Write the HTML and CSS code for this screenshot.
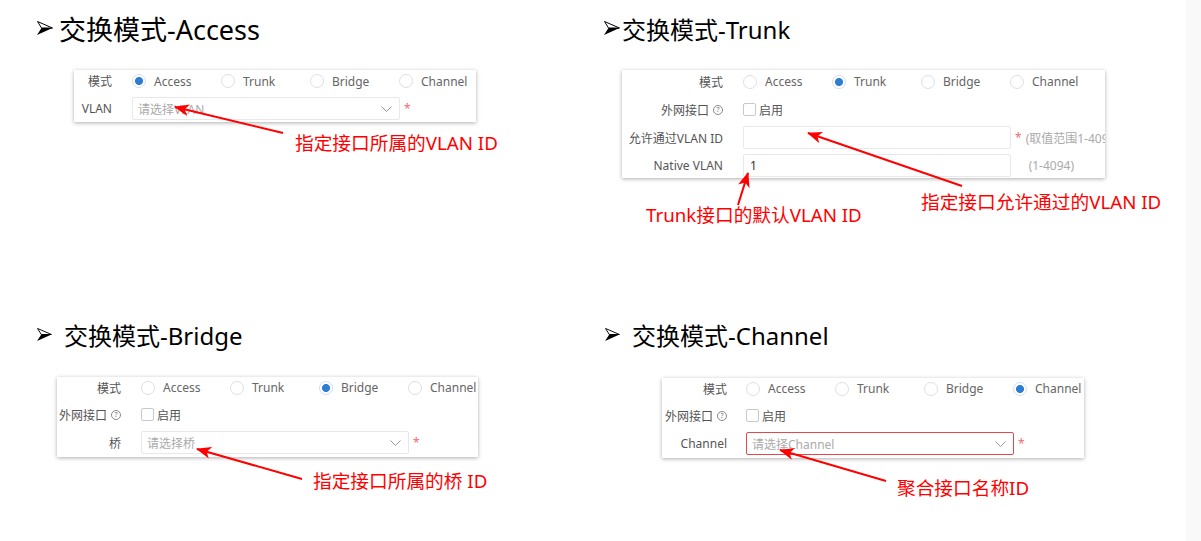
FILE: index.html
```html
<!DOCTYPE html>
<html lang="zh-CN">
<head>
<meta charset="utf-8">
<title>交换模式</title>
<link rel="stylesheet" href="styles.css">
</head>
<body>
<div class="page">
  <div class="slide">
    <!-- Access -->
    <section class="quad quad--top quad--a">
      <h2 class="heading heading--big">
        <svg class="bullet bullet--a" viewBox="0 0 16 14"><polygon points="0.5,0.5 15.5,7 4.5,7" fill="#fff" stroke="#000" stroke-width="1"/><polygon points="4.5,7 15.5,7 0,14" fill="#000"/></svg>
        <span>交换模式-Access</span>
      </h2>
      <div class="panel panel--access">
        <div class="row row--first">
          <div class="lbl">模式</div>
          <div class="radios">
            <span class="radio is-on"><i></i>Access</span>
            <span class="radio"><i></i>Trunk</span>
            <span class="radio"><i></i>Bridge</span>
            <span class="radio"><i></i>Channel</span>
          </div>
        </div>
        <div class="row">
          <div class="lbl">VLAN</div>
          <div class="select"><span class="ph">请选择VLAN</span><svg class="chev" viewBox="0 0 11 6"><polyline points="0.5,0.5 5.5,5.5 10.5,0.5" fill="none" stroke="#999" stroke-width="1"/></svg></div>
          <span class="req">*</span>
        </div>
      </div>
    </section>

    <!-- Trunk -->
    <section class="quad quad--top quad--t">
      <h2 class="heading">
        <svg class="bullet bullet--t" viewBox="0 0 16 14"><polygon points="0.5,0.5 15.5,7 4.5,7" fill="#fff" stroke="#000" stroke-width="1"/><polygon points="4.5,7 15.5,7 0,14" fill="#000"/></svg>
        <span>交换模式-Trunk</span>
      </h2>
      <div class="panel panel--trunk">
        <div class="row">
          <div class="lbl">模式</div>
          <div class="radios">
            <span class="radio"><i></i>Access</span>
            <span class="radio is-on"><i></i>Trunk</span>
            <span class="radio"><i></i>Bridge</span>
            <span class="radio"><i></i>Channel</span>
          </div>
        </div>
        <div class="row">
          <div class="lbl">外网接口<span class="qmark">?</span></div>
          <div class="check"><i></i>启用</div>
        </div>
        <div class="row">
          <div class="lbl">允许通过VLAN ID</div>
          <div class="input"></div>
          <span class="req">*</span>
          <span class="hint">(取值范围1-4094)</span>
        </div>
        <div class="row">
          <div class="lbl">Native VLAN</div>
          <div class="input"><span class="val">1</span></div>
          <span class="req req--hidden">*</span>
          <span class="hint hint--wide">(1-4094)</span>
        </div>
      </div>
    </section>

    <!-- Bridge -->
    <section class="quad quad--bottom quad--b">
      <h2 class="heading">
        <svg class="bullet bullet--b" viewBox="0 0 16 14"><polygon points="0.5,0.5 15.5,7 4.5,7" fill="#fff" stroke="#000" stroke-width="1"/><polygon points="4.5,7 15.5,7 0,14" fill="#000"/></svg>
        <span>交换模式-Bridge</span>
      </h2>
      <div class="panel panel--bridge">
        <div class="row row--clip">
          <div class="lbl">模式</div>
          <div class="radios">
            <span class="radio"><i></i>Access</span>
            <span class="radio"><i></i>Trunk</span>
            <span class="radio is-on"><i></i>Bridge</span>
            <span class="radio"><i></i>Channel</span>
          </div>
        </div>
        <div class="row">
          <div class="lbl">外网接口<span class="qmark">?</span></div>
          <div class="check"><i></i>启用</div>
        </div>
        <div class="row">
          <div class="lbl">桥</div>
          <div class="select"><span class="ph">请选择桥</span><svg class="chev" viewBox="0 0 11 6"><polyline points="0.5,0.5 5.5,5.5 10.5,0.5" fill="none" stroke="#999" stroke-width="1"/></svg></div>
          <span class="req">*</span>
        </div>
      </div>
    </section>

    <!-- Channel -->
    <section class="quad quad--bottom quad--c">
      <h2 class="heading">
        <svg class="bullet bullet--c" viewBox="0 0 16 14"><polygon points="0.5,0.5 15.5,7 4.5,7" fill="#fff" stroke="#000" stroke-width="1"/><polygon points="4.5,7 15.5,7 0,14" fill="#000"/></svg>
        <span>交换模式-Channel</span>
      </h2>
      <div class="panel panel--channel">
        <div class="row row--clip">
          <div class="lbl">模式</div>
          <div class="radios">
            <span class="radio"><i></i>Access</span>
            <span class="radio"><i></i>Trunk</span>
            <span class="radio"><i></i>Bridge</span>
            <span class="radio is-on"><i></i>Channel</span>
          </div>
        </div>
        <div class="row">
          <div class="lbl">外网接口<span class="qmark">?</span></div>
          <div class="check"><i></i>启用</div>
        </div>
        <div class="row">
          <div class="lbl">Channel</div>
          <div class="select select--error"><span class="ph">请选择Channel</span><svg class="chev" viewBox="0 0 11 6"><polyline points="0.5,0.5 5.5,5.5 10.5,0.5" fill="none" stroke="#999" stroke-width="1"/></svg></div>
          <span class="req">*</span>
        </div>
      </div>
    </section>
  </div>

  <!-- callout annotations -->
  <svg class="arrows" viewBox="0 0 1201 541" width="1201" height="541">
    <defs>
      <marker id="head" markerUnits="userSpaceOnUse" markerWidth="16" markerHeight="12" refX="14" refY="6" orient="auto">
        <path d="M0,0 L15,6 L0,12 L4,6 Z" fill="#f00"/>
      </marker>
    </defs>
    <g stroke="#f00" stroke-width="2" fill="none" marker-end="url(#head)">
      <line x1="283" y1="133" x2="175" y2="107"/>
      <line x1="738" y1="205" x2="748" y2="173"/>
      <line x1="962" y1="186" x2="808" y2="133"/>
      <line x1="302" y1="479" x2="197" y2="449"/>
      <line x1="886" y1="481" x2="780" y2="450"/>
    </g>
  </svg>
  <div class="note note--1">指定接口所属的VLAN ID</div>
  <div class="note note--2">Trunk接口的默认VLAN ID</div>
  <div class="note note--3">指定接口允许通过的VLAN ID</div>
  <div class="note note--4">指定接口所属的桥 ID</div>
  <div class="note note--5">聚合接口名称ID</div>
</div>
</body>
</html>
```

FILE: styles.css
```css
* { box-sizing: border-box; }

html, body {
  margin: 0;
  padding: 0;
}

body {
  background: linear-gradient(to right, #ffffff 1186px, #f9f9f9 1186px);
  font-family: "Noto Sans", "Noto Sans CJK SC", sans-serif;
}

.page {
  position: relative;
  width: 1201px;
  height: 541px;
  overflow: hidden;
}

.slide {
  display: grid;
  grid-template-columns: 600px 601px;
  grid-template-rows: 305px 236px;
}

.quad {
  display: flex;
  flex-direction: column;
  align-items: flex-start;
}

.quad--top { padding-top: 13px; }
.quad--bottom { padding-top: 14px; }

.quad--a { padding-left: 37px; }
.quad--t { padding-left: 4px; }
.quad--b { padding-left: 37px; }
.quad--c { padding-left: 5px; }

/* headings */
.heading {
  display: flex;
  align-items: center;
  height: 30px;
  margin: 0;
  font-size: 24px;
  font-weight: 400;
  color: #000;
  white-space: nowrap;
  font-family: "Noto Sans", "Noto Sans CJK SC", sans-serif;
}

.heading--big { font-size: 27px; }

.bullet {
  width: 16px;
  height: 14px;
  flex: none;
}

.bullet--a { margin-right: 6px; }
.bullet--t { margin-right: 2px; }
.bullet--b { margin-right: 12px; width: 15px; height: 13px; }
.bullet--c { margin-right: 12px; width: 15px; height: 13px; }

/* panel */
.panel {
  --lbl: 38px;
  --r1: 23px;
  display: flex;
  flex-direction: column;
  gap: 5px;
  background: #fff;
  box-shadow: 0 1px 4px rgba(0, 0, 0, 0.32);
  overflow: hidden;
  font-size: 12px;
  color: #666;
}

.panel--access {
  margin-top: 27px;
  margin-left: 37px;
  width: 402px;
  --lbl: 38px;
  --r1: 22px;
  padding-bottom: 2px;
}

.panel--trunk {
  margin-top: 27px;
  margin-left: 18px;
  width: 483px;
  --lbl: 101px;
  --r1: 23px;
  padding-bottom: 1px;
}

.panel--bridge {
  margin-top: 28px;
  margin-left: 20px;
  width: 421px;
  --lbl: 64px;
  --r1: 21px;
  padding-bottom: 3px;
}

.panel--channel {
  margin-top: 29px;
  margin-left: 57px;
  width: 422px;
  --lbl: 65px;
  --r1: 21px;
  padding-bottom: 3px;
}

.row {
  display: flex;
  align-items: center;
  height: 23px;
  white-space: nowrap;
}

.row:first-child { height: var(--r1); }

.lbl {
  flex: none;
  width: var(--lbl);
  display: flex;
  justify-content: flex-end;
  align-items: center;
  margin-right: 20px;
  color: #555;
}

.panel--channel .lbl { margin-right: 19px; }

.qmark {
  display: inline-flex;
  align-items: center;
  justify-content: center;
  width: 10px;
  height: 10px;
  margin-left: 4px;
  border: 1px solid #8a8a8a;
  border-radius: 50%;
  font-size: 7px;
  line-height: 1;
  color: #777;
}

/* radios */
.radios {
  display: flex;
  flex: none;
}

.radio {
  display: flex;
  align-items: center;
  width: 89px;
  flex: none;
  color: #666;
}

.radio i {
  width: 14px;
  height: 14px;
  margin-right: 8px;
  border: 1px solid #dcdfe6;
  border-radius: 50%;
  background: #fff;
  flex: none;
}

.radio.is-on i {
  border-color: #d3dfee;
  background: radial-gradient(circle, #2d7dd2 0, #2d7dd2 3.6px, #fff 4.4px);
}

/* checkbox */
.check {
  display: flex;
  align-items: center;
  color: #555;
}

.check i {
  width: 13px;
  height: 13px;
  margin-right: 3px;
  border: 1px solid #c9c9c9;
  border-radius: 2px;
  background: #fff;
}

/* inputs */
.select,
.input {
  flex: none;
  width: 268px;
  height: 23px;
  border: 1px solid #e6e8eb;
  border-radius: 2px;
  display: flex;
  align-items: center;
  justify-content: space-between;
  padding: 0 7px 0 5px;
}

.select--error { border-color: #e4474c; }

.ph { color: #aaa; }
.val { color: #333; padding-left: 1px; }

.chev {
  width: 11px;
  height: 6px;
}

.req {
  margin-left: 4px;
  color: #f56c6c;
  font-size: 12px;
}

.req--hidden { visibility: hidden; }

.hint {
  margin-left: 4px;
  color: #aaa;
}

.hint--wide { margin-left: 7px; }

/* callouts */
.arrows {
  position: absolute;
  left: 0;
  top: 0;
  pointer-events: none;
}

.note {
  position: absolute;
  font-size: 18.7px;
  line-height: 24px;
  color: #f00;
  white-space: nowrap;
  font-family: "Noto Sans", "Noto Sans CJK SC", sans-serif;
}

.note--1 { left: 295px; top: 131px; }
.note--2 { left: 646px; top: 203px; }
.note--3 { left: 921px; top: 190px; }
.note--4 { left: 313px; top: 469px; }
.note--5 { left: 897px; top: 476px; }
```
